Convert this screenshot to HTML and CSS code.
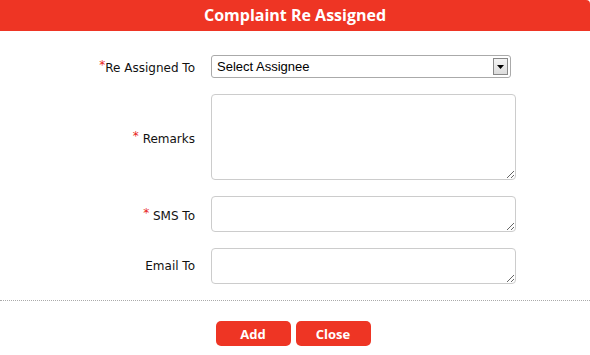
FILE: index.html
```html
<!DOCTYPE html>
<html lang="en">
<head>
    <link rel="stylesheet" href="styles.css">
</head>
<body>
    <div class="dialog">
        <div class="dialog-title">Complaint Re Assigned</div>
        <div class="dialog-body">
            <div class="form-row row-select">
                <label class="form-label"><span class="req">*</span>Re Assigned To</label>
                <div class="select-box">
                    <span class="select-text">Select Assignee</span>
                    <span class="select-arrow">
                        <svg width="7" height="4" viewBox="0 0 7 4"><path d="M0 0H7L3.5 4Z" fill="#000"/></svg>
                    </span>
                </div>
            </div>
            <div class="form-row row-remarks">
                <label class="form-label"><span class="req">*</span> Remarks</label>
                <textarea class="field field-tall"></textarea>
            </div>
            <div class="form-row row-sms">
                <label class="form-label"><span class="req">*</span> SMS To</label>
                <textarea class="field"></textarea>
            </div>
            <div class="form-row row-email">
                <label class="form-label">Email To</label>
                <textarea class="field"></textarea>
            </div>
        </div>
        <div class="dialog-footer">
            <button class="btn">Add</button>
            <button class="btn">Close</button>
        </div>
    </div>
</body>
</html>
```

FILE: styles.css
```css
body {
    margin: 0;
    padding: 0;
    background-color: #fff;
    font-family: "DejaVu Sans", Verdana, sans-serif;
}

.dialog {
    width: 590px;
    height: 355px;
    background-color: #fff;
}

.dialog-title {
    height: 31px;
    line-height: 31px;
    background-color: #ee3524;
    color: #fff;
    text-align: center;
    font-family: "Open Sans", sans-serif;
    font-weight: bold;
    font-size: 16px;
    border-top-right-radius: 4px;
}

.dialog-body {
    padding-top: 24px;
    padding-bottom: 16px;
    border-bottom: 1px dotted #aaa;
}

.form-row {
    display: flex;
    align-items: center;
    margin-bottom: 16px;
}

.form-row:last-child {
    margin-bottom: 0;
}

.form-label {
    width: 211px;
    padding-right: 16px;
    box-sizing: border-box;
    text-align: right;
    font-size: 12px;
    color: #111;
}

.row-select .form-label {
    align-self: flex-start;
    padding-top: 3px;
}

.req {
    color: #e8231b;
    vertical-align: 3px;
}

.select-box {
    display: flex;
    align-items: center;
    width: 300px;
    height: 23px;
    box-sizing: border-box;
    border: 1px solid #aaa;
    border-radius: 3px;
    font-family: "Liberation Sans", Arial, sans-serif;
    font-size: 13px;
    color: #000;
}

.select-text {
    flex: 1;
    padding-left: 5px;
}

.select-arrow {
    display: flex;
    align-items: center;
    justify-content: center;
    width: 15px;
    height: 17px;
    margin-right: 2px;
    border: 1px solid #888;
    background: linear-gradient(#f4f4f4, #dcdcdc);
    box-sizing: border-box;
}

.field {
    display: block;
    width: 305px;
    height: 36px;
    margin: 0;
    box-sizing: border-box;
    border: 1px solid #ccc;
    border-radius: 4px;
    padding: 2px;
    font-family: inherit;
}

.field-tall {
    height: 86px;
}

.dialog-footer {
    display: flex;
    justify-content: center;
    gap: 5px;
    padding-top: 20px;
    padding-right: 4px;
}

.btn {
    width: 75px;
    height: 25px;
    border: none;
    border-radius: 5px;
    background-color: #ee3524;
    color: #fff;
    font-family: "Open Sans", sans-serif;
    font-weight: bold;
    font-size: 13px;
    cursor: pointer;
}
```
